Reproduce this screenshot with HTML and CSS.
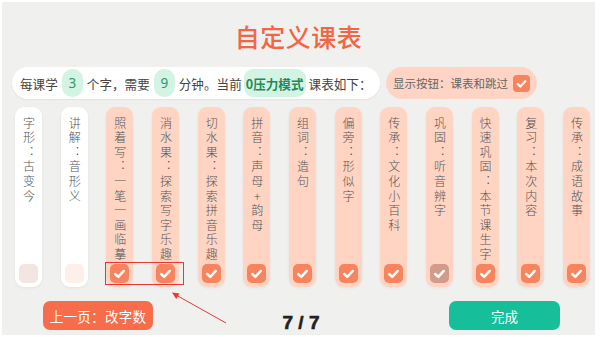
FILE: index.html
```html
<!DOCTYPE html>
<html lang="zh-CN">
<head>
<meta charset="utf-8">
<title>自定义课表</title>
<link rel="stylesheet" href="styles.css">
</head>
<body>
<div class="frame">
  <h1 class="title">自定义课表</h1>
  <div class="info-row">
    <div class="info">每课学<span class="num">3</span>个字，需要<span class="num">9</span>分钟。当前<span class="mode">0压力模式</span>课表如下：</div>
    <div class="toggle">显示按钮：课表和跳过<span class="cb small"><svg viewBox="0 0 20 20"><path d="M5.5 10.5l3.2 3 5.8-6.2"/></svg></span></div>
  </div>
  <div class="cols">
    <div class="col white"><div class="txt">字形：古变今</div><span class="cb off1"></span></div>
    <div class="col white"><div class="txt">讲解：音形义</div><span class="cb off2"></span></div>
    <div class="col"><div class="txt">照着写：一笔一画临摹</div><span class="cb"><svg viewBox="0 0 20 20"><path d="M5.5 10.5l3.2 3 5.8-6.2"/></svg></span></div>
    <div class="col"><div class="txt">消水果：探索写字乐趣</div><span class="cb"><svg viewBox="0 0 20 20"><path d="M5.5 10.5l3.2 3 5.8-6.2"/></svg></span></div>
    <div class="col"><div class="txt">切水果：探索拼音乐趣</div><span class="cb"><svg viewBox="0 0 20 20"><path d="M5.5 10.5l3.2 3 5.8-6.2"/></svg></span></div>
    <div class="col"><div class="txt">拼音：声母+韵母</div><span class="cb"><svg viewBox="0 0 20 20"><path d="M5.5 10.5l3.2 3 5.8-6.2"/></svg></span></div>
    <div class="col"><div class="txt">组词：造句</div><span class="cb"><svg viewBox="0 0 20 20"><path d="M5.5 10.5l3.2 3 5.8-6.2"/></svg></span></div>
    <div class="col"><div class="txt">偏旁：形似字</div><span class="cb"><svg viewBox="0 0 20 20"><path d="M5.5 10.5l3.2 3 5.8-6.2"/></svg></span></div>
    <div class="col"><div class="txt">传承：文化小百科</div><span class="cb"><svg viewBox="0 0 20 20"><path d="M5.5 10.5l3.2 3 5.8-6.2"/></svg></span></div>
    <div class="col"><div class="txt">巩固：听音辨字</div><span class="cb muted"><svg viewBox="0 0 20 20"><path d="M5.5 10.5l3.2 3 5.8-6.2"/></svg></span></div>
    <div class="col"><div class="txt">快速巩固：本节课生字</div><span class="cb"><svg viewBox="0 0 20 20"><path d="M5.5 10.5l3.2 3 5.8-6.2"/></svg></span></div>
    <div class="col"><div class="txt">复习：本次内容</div><span class="cb"><svg viewBox="0 0 20 20"><path d="M5.5 10.5l3.2 3 5.8-6.2"/></svg></span></div>
    <div class="col"><div class="txt">传承：成语故事</div><span class="cb"><svg viewBox="0 0 20 20"><path d="M5.5 10.5l3.2 3 5.8-6.2"/></svg></span></div>
  </div>
  <div class="bottom">
    <button class="btn prev">上一页：改字数</button>
    <div class="page">7 / 7</div>
    <button class="btn done">完成</button>
  </div>
  <svg class="annot" viewBox="0 0 600 337">
    <rect x="105.5" y="262.5" width="78" height="22" />
    <line x1="226" y1="323" x2="176" y2="295" />
    <path class="head" d="M172 292.5 L179.5 293.5 L176.2 299 Z" />
  </svg>
</div>
</body>
</html>
```

FILE: styles.css
```css
* { box-sizing: border-box; }
html, body { margin: 0; padding: 0; }
body {
  width: 600px;
  height: 337px;
  background: #ffffff;
  overflow: hidden;
  font-family: "Noto Sans CJK SC", "Noto Sans", sans-serif;
  color: #444;
}
.frame {
  position: relative;
  margin: 2px 0 0 2px;
  width: 593px;
  height: 333px;
  background: #f0f0ee;
  display: flex;
  flex-direction: column;
}
.title {
  margin: 17px 0 0;
  height: 34px;
  line-height: 34px;
  text-align: center;
  font-size: 25px;
  font-weight: 500;
  color: #f26645;
  letter-spacing: 0.5px;
}
.info-row {
  margin-top: 14px;
  padding-left: 10px;
  display: flex;
  gap: 6px;
  height: 32px;
}
.info {
  width: 368px;
  height: 32px;
  background: #ffffff;
  border-radius: 16px;
  box-shadow: 0 1px 2px rgba(0,0,0,0.06);
  display: flex;
  align-items: center;
  padding-left: 8px;
  font-size: 12.6px;
  color: #444;
  white-space: nowrap;
}
.num {
  display: inline-flex;
  align-items: center;
  justify-content: center;
  width: 21px;
  height: 28px;
  margin: 0 4px;
  border-radius: 10px;
  background: #d3f4e5;
  color: #2a9a6c;
  font-family: "Noto Sans", sans-serif;
  font-size: 13.5px;
}
.mode {
  display: inline-flex;
  align-items: center;
  height: 28px;
  padding: 0 2px;
  margin: 0 3px 0 2px;
  border-radius: 9px;
  background: #d3f4e5;
  color: #1f8a5a;
  font-weight: 700;
  font-size: 12.6px;
}
.toggle {
  width: 151px;
  height: 32px;
  background: #ffd4c4;
  border-radius: 16px;
  display: flex;
  align-items: center;
  padding-left: 7px;
  font-size: 11.5px;
  color: #666;
  white-space: nowrap;
}
.cb {
  display: flex;
  align-items: center;
  justify-content: center;
  width: 19px;
  height: 19px;
  border-radius: 5px;
  background: #f7845e;
  flex: none;
}
.cb svg { width: 19px; height: 19px; }
.cb path { fill: none; stroke: #fff; stroke-width: 2.6; stroke-linecap: round; stroke-linejoin: round; }
.cb.small { width: 17px; height: 17px; border-radius: 4px; margin-left: 5px; }
.cb.small svg { width: 17px; height: 17px; }
.cb.off1 { background: #f3e6e2; }
.cb.off2 { background: #fdefea; }
.cb.muted { background: #d39b89; }
.cols {
  margin-top: 8px;
  height: 180px;
  padding: 0 5px 0 13px;
  display: flex;
  justify-content: space-between;
}
.col {
  width: 27px;
  height: 180px;
  border-radius: 9px;
  background: #ffd4c2;
  box-shadow: 0 1px 3px rgba(0,0,0,0.06);
  display: flex;
  flex-direction: column;
  align-items: center;
  justify-content: space-between;
  padding: 10px 0 4px;
}
.col.white { background: #ffffff; }
.txt {
  writing-mode: vertical-rl;
  text-orientation: upright;
  font-size: 12px;
  font-weight: 300;
  line-height: 14px;
  letter-spacing: 2.6px;
  color: #555;
}
.bottom {
  margin-top: 14px;
  height: 29px;
  padding: 0 35px 0 41px;
  display: flex;
  justify-content: space-between;
  align-items: center;
}
.btn {
  border: none;
  height: 29px;
  border-radius: 7px;
  color: #fff;
  font-family: "Noto Sans CJK SC", sans-serif;
  padding: 0;
}
.prev {
  width: 110px;
  background: #f76d4b;
  font-size: 13.5px;
  letter-spacing: 0.3px;
}
.done {
  width: 111px;
  background: #17be9a;
  font-size: 13.5px;
}
.page {
  font-family: "Liberation Sans", Arial, sans-serif;
  font-weight: 900;
  font-size: 19px;
  color: #222;
  padding-top: 14px;
  -webkit-text-stroke: 0.6px #222;
}
.annot {
  position: absolute;
  left: -2px;
  top: -2px;
  width: 600px;
  height: 337px;
  pointer-events: none;
}
.annot rect, .annot line { fill: none; stroke: #e53935; stroke-width: 1; }
.annot .head { fill: #e53935; stroke: none; }
```
